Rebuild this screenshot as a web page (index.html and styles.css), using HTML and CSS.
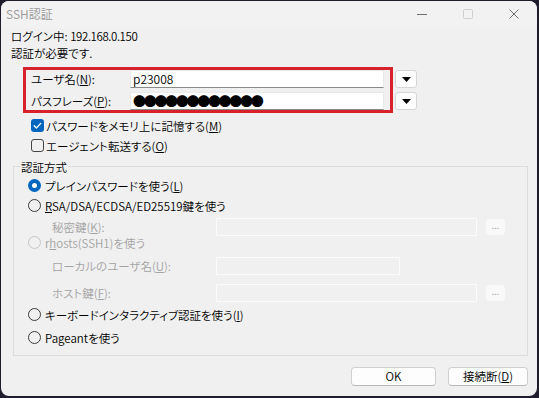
FILE: index.html
```html
<!DOCTYPE html>
<html lang="ja">
<head>
<meta charset="utf-8">
<title>SSH認証</title>
<link rel="stylesheet" href="styles.css">
</head>
<body>
<div class="window">
  <div class="titlebar">
    <div class="title">SSH認証</div>
    <div class="controls">
      <div class="ctl"><svg width="10" height="10" viewBox="0 0 10 10"><path d="M0 5.5H10" stroke="#6f6f6f" stroke-width="1"/></svg></div>
      <div class="ctl"><svg width="10" height="10" viewBox="0 0 10 10"><rect x="0.5" y="0.5" width="9" height="9" rx="1" fill="none" stroke="#cfcfcf" stroke-width="1"/></svg></div>
      <div class="ctl"><svg width="10" height="10" viewBox="0 0 10 10"><path d="M0.5 0.5L9.5 9.5M9.5 0.5L0.5 9.5" stroke="#6f6f6f" stroke-width="1"/></svg></div>
    </div>
  </div>
  <div class="content">
    <div class="line">ログイン中: <span class="num">192.168.0.150</span></div>
    <div class="line">認証が必要です.</div>
    <div class="cred-row">
      <div class="credbox">
        <div class="field"><span class="flabel">ユーザ名(<u>N</u>):</span><div class="input">p23008</div></div>
        <div class="field"><span class="flabel">パスフレーズ(<u>P</u>):</span><div class="input pw">●●●●●●●●●●●●</div></div>
      </div>
      <div class="drops">
        <div class="drop"><svg width="9" height="5" viewBox="0 0 9 5"><path d="M0 0H9L4.5 5Z" fill="#000"/></svg></div>
        <div class="drop"><svg width="9" height="5" viewBox="0 0 9 5"><path d="M0 0H9L4.5 5Z" fill="#000"/></svg></div>
      </div>
    </div>
    <div class="checks">
      <div class="check"><span class="cbox on"><svg width="13" height="13" viewBox="0 0 13 13"><path d="M3.2 6.8L5.4 9L9.8 4.4" fill="none" stroke="#fff" stroke-width="1.3" stroke-linecap="round" stroke-linejoin="round"/></svg></span><span>パスワードをメモリ上に記憶する(<u>M</u>)</span></div>
      <div class="check"><span class="cbox off"></span><span>エージェント転送する(<u>O</u>)</span></div>
    </div>
    <div class="group">
      <div class="gtitle">認証方式</div>
      <div class="radio r1"><span class="rdot on"><span class="inner"></span></span><span>プレインパスワードを使う(<u>L</u>)</span></div>
      <div class="radio r2"><span class="rdot"></span><span><u>R</u>SA/DSA/ECDSA/ED25519鍵を使う</span></div>
      <div class="sub s1"><span class="slabel">秘密鍵(<u>K</u>):</span><div class="dinput wide"></div><div class="dots">...</div></div>
      <div class="radio r3 dis"><span class="rdot"></span><span>r<u>h</u>osts(SSH1)を使う</span></div>
      <div class="sub s2"><span class="slabel">ローカルのユーザ名(<u>U</u>):</span><div class="dinput narrow"></div></div>
      <div class="sub s3"><span class="slabel">ホスト鍵(<u>F</u>):</span><div class="dinput wide"></div><div class="dots">...</div></div>
      <div class="radio r4"><span class="rdot"></span><span>キーボードインタラクティブ認証を使う(<u>I</u>)</span></div>
      <div class="radio r5"><span class="rdot"></span><span>Pageantを使う</span></div>
    </div>
    <div class="buttons">
      <div class="btn ok">OK</div>
      <div class="btn cancel">接続断(<u>D</u>)</div>
    </div>
  </div>
</div>
</body>
</html>
```
FILE: styles.css
```css
html, body {
  margin: 0;
  padding: 0;
}
body {
  background: #1f1c2e;
  font-family: "Noto Sans CJK JP", "Noto Sans", sans-serif;
  font-size: 11.5px;
  font-weight: 350;
  font-feature-settings: "palt";
  color: #000;
  width: 539px;
  height: 398px;
  overflow: hidden;
}
u {
  text-decoration-thickness: 1px;
  text-underline-offset: 1px;
}
.window {
  margin: 1px 2px 2px 1px;
  height: 395px;
  background: #f0f0f0;
  border-radius: 8px;
  overflow: hidden;
  display: flex;
  flex-direction: column;
}
.titlebar {
  height: 27px;
  display: flex;
  justify-content: space-between;
  background: #f2f2f2;
}
.title {
  padding-left: 5px;
  line-height: 26px;
  color: #999;
  font-size: 12px;
}
.controls {
  display: flex;
}
.ctl {
  width: 46px;
  height: 26px;
  display: flex;
  align-items: center;
  justify-content: center;
}
.content {
  padding: 0 9px;
  display: flex;
  flex-direction: column;
}
.line {
  height: 17px;
  line-height: 17px;
  padding-left: 1px;
}
.num {
  letter-spacing: -0.4px;
}
.cred-row {
  display: flex;
  margin: 5px 0 0 13px;
}
.credbox {
  width: 370px;
  height: 46px;
  box-sizing: border-box;
  border: 3px solid #d8222b;
  padding: 0 5px;
  display: flex;
  flex-direction: column;
  gap: 4px;
}
.field {
  display: flex;
  align-items: center;
  height: 18px;
}
.flabel {
  width: 99px;
  line-height: 18px;
}
.input {
  width: 254px;
  height: 18px;
  box-sizing: border-box;
  background: #fff;
  border: 1px solid #e8e8e8;
  border-bottom-color: #8a8a8a;
  padding-left: 2px;
  line-height: 16px;
  overflow: hidden;
  white-space: nowrap;
  font-size: 12px;
}
.input.pw {
  font-size: 13px;
  font-weight: 400;
  font-feature-settings: normal;
  letter-spacing: -2.3px;
  line-height: 15px;
}
.drops {
  display: flex;
  flex-direction: column;
  gap: 4px;
  margin: 3px 0 0 2px;
}
.drop {
  width: 22px;
  height: 18px;
  box-sizing: border-box;
  border: 1px solid #d6d6d6;
  border-radius: 3px;
  background: #fdfdfd;
  display: flex;
  align-items: center;
  justify-content: center;
}
.checks {
  display: flex;
  flex-direction: column;
  gap: 3px;
  margin: 4px 0 0 21px;
}
.check {
  display: flex;
  align-items: center;
  gap: 2px;
  height: 17px;
}
.cbox {
  width: 13px;
  height: 13px;
  box-sizing: border-box;
  border-radius: 3px;
  display: flex;
}
.cbox.on {
  background: #0067c0;
}
.cbox.off {
  border: 1px solid #444;
}
.group {
  margin: 12px 0 0 3px;
  border: 1px solid #dcdcdc;
  padding: 0 0 9px 14px;
  display: flex;
  flex-direction: column;
}
.gtitle {
  margin: -8px 0 0 -8px;
  padding: 0 1px;
  width: max-content;
  height: 16px;
  line-height: 16px;
  background: #f0f0f0;
}
.radio {
  display: flex;
  align-items: center;
  gap: 4px;
  height: 17px;
}
.rdot {
  width: 13px;
  height: 13px;
  box-sizing: border-box;
  border-radius: 50%;
  border: 1px solid #3c3c3c;
  display: flex;
  align-items: center;
  justify-content: center;
  flex: none;
}
.rdot.on {
  border: none;
  background: #0067c0;
}
.rdot .inner {
  width: 5px;
  height: 5px;
  border-radius: 50%;
  background: #fff;
}
.r1 { margin-top: 2px; }
.r2 { margin-top: 3px; }
.r3 { margin-top: 0; height: 13px; }
.r4 { margin-top: 4px; }
.r5 { margin-top: 6px; }
.dis {
  color: #a3a3a3;
}
.dis .rdot {
  border-color: #c6c6c6;
}
.sub {
  display: flex;
  align-items: center;
  height: 18px;
  color: #a3a3a3;
}
.s1 { margin-top: 4px; }
.s2 { margin-top: 8px; }
.s3 { margin-top: 9px; }
.slabel {
  margin-left: 24px;
  width: 164px;
}
.dinput {
  height: 18px;
  box-sizing: border-box;
  border: 1px solid #fbfbfb;
  background: #f0f0f0;
}
.dinput.wide { width: 261px; }
.dinput.narrow { width: 184px; }
.dots {
  margin-left: 9px;
  width: 19px;
  height: 16px;
  border-radius: 4px;
  background: #f9f9f9;
  color: #a0a0a0;
  font-size: 9px;
  line-height: 14px;
  text-align: center;
}
.buttons {
  display: flex;
  justify-content: flex-end;
  gap: 12px;
  margin-top: 11px;
}
.btn {
  height: 19px;
  box-sizing: border-box;
  border: 1px solid #d0d0d0;
  border-bottom-color: #b8b8b8;
  border-radius: 4px;
  background: #fdfdfd;
  line-height: 17px;
  text-align: center;
}
.btn.ok { width: 85px; }
.btn.cancel { width: 80px; }
```
